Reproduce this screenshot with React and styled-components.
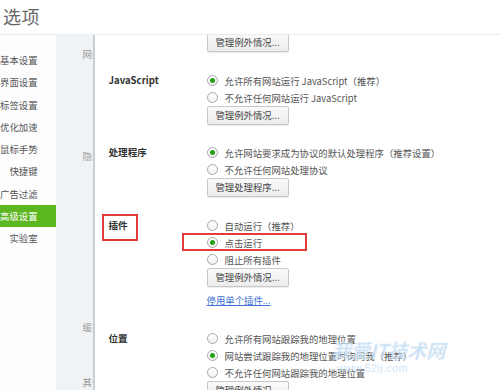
import React from "react";
import styled, { createGlobalStyle } from "styled-components";

const GlobalStyle = createGlobalStyle`
  html, body {
    margin: 0;
    padding: 0;
    background: #fff;
  }
  body {
    width: 500px;
    height: 390px;
    overflow: hidden;
    font-family: "Noto Sans CJK SC", "Noto Sans", sans-serif;
  }
`;

const Page = styled.div`
  position: relative;
  display: flex;
  flex-direction: column;
  width: 500px;
  height: 390px;
  overflow: hidden;
`;

const Header = styled.header`
  flex: 0 0 auto;
  height: 34px;
  padding-left: 3px;
  border-bottom: 1px solid #ececec;
  position: relative;
  z-index: 2;
  background: #fff;
`;

const Title = styled.h1`
  margin: 0;
  font-size: 18px;
  font-weight: normal;
  line-height: 33px;
  color: #666;
  letter-spacing: 0.5px;
`;

const Body = styled.div`
  flex: 1;
  display: flex;
  overflow: hidden;
`;

const Sidebar = styled.nav`
  flex: 0 0 55px;
  padding-top: 14px;
  background: #fdfdfe;
`;

const NavItem = styled.div`
  height: 22.3px;
  line-height: 22.3px;
  padding-right: 18px;
  text-align: right;
  font-size: 9.4px;
  white-space: nowrap;
  color: ${({ $active }) => ($active ? "#fff" : "#555")};
  background: ${({ $active }) => ($active ? "#5cb61f" : "transparent")};
`;

const Strip = styled.div`
  flex: 0 0 37px;
  display: flex;
  flex-direction: column;
  background: #f0f3f6;
  border-right: 2px solid #c9ced3;
  overflow: hidden;
`;

const StripHead = styled.div`
  margin-top: ${({ $gap }) => $gap}px;
  padding-left: 27px;
  height: 12px;
  line-height: 12px;
  font-size: 9.5px;
  color: #9a9a9a;
  white-space: nowrap;
`;

const Main = styled.main`
  flex: 1;
  padding-left: 14px;
  overflow: hidden;
`;

const Section = styled.section`
  display: grid;
  grid-template-columns: 98px 1fr;
  margin-top: ${({ $gap }) => $gap}px;
`;

const Label = styled.div`
  position: relative;
  align-self: start;
  height: 17px;
  line-height: 17px;
  font-size: 9.6px;
  font-weight: bold;
  color: #333;
  white-space: nowrap;
`;

const Options = styled.div`
  display: flex;
  flex-direction: column;
  align-items: flex-start;
`;

const Row = styled.label`
  position: relative;
  display: flex;
  align-items: center;
  gap: 7px;
  height: 17px;
  font-size: 9.4px;
  color: #555;
  white-space: nowrap;
`;

const Radio = styled.span`
  box-sizing: border-box;
  display: flex;
  align-items: center;
  justify-content: center;
  width: 11px;
  height: 11px;
  border-radius: 50%;
  border: 1px solid #a9a9a9;
  background: linear-gradient(#fff, #f1f1f1);
  &::after {
    content: "";
    display: ${({ $checked }) => ($checked ? "block" : "none")};
    width: 5px;
    height: 5px;
    border-radius: 50%;
    background: #23a014;
  }
`;

const Button = styled.button`
  box-sizing: border-box;
  height: 19px;
  width: 82px;
  margin-top: ${({ $offset }) => $offset || 0}px;
  padding: 0;
  border: 1px solid #c8c8c8;
  border-radius: 2px;
  background: linear-gradient(#fafafa, #ececec);
  box-shadow: 0 1px 1px rgba(0, 0, 0, 0.08);
  font-family: inherit;
  font-size: 9.4px;
  color: #444;
  text-align: center;
  line-height: 17px;
`;

const Link = styled.a`
  margin-top: 5px;
  height: 17px;
  line-height: 17px;
  font-size: 9.4px;
  color: #3e6fd6;
  text-decoration: underline;
`;

const Mark = styled.span`
  position: absolute;
  top: ${({ $top }) => $top}px;
  left: ${({ $left }) => $left}px;
  width: ${({ $w }) => $w}px;
  height: ${({ $h }) => $h}px;
  box-sizing: border-box;
  border: 2px solid #e53a3a;
  pointer-events: none;
`;

const Watermark = styled.div`
  position: absolute;
  left: 332px;
  top: 338px;
  display: flex;
  flex-direction: column;
  align-items: flex-start;
  pointer-events: none;
  opacity: 0.75;
`;

const WmTitle = styled.span`
  font-size: 19px;
  font-weight: bold;
  font-style: italic;
  line-height: 24px;
  color: #bcd9f2;
  -webkit-text-stroke: 0.5px #e2eef9;
  white-space: nowrap;
`;

const WmUrl = styled.span`
  margin-left: 5px;
  font-family: "Liberation Sans", sans-serif;
  font-size: 11px;
  line-height: 12px;
  color: #c4ddf2;
  letter-spacing: 0.3px;
`;

const navItems = ["基本设置", "界面设置", "标签设置", "优化加速", "鼠标手势", "快捷键", "广告过滤", "高级设置", "实验室"];

const Option = ({ checked, children, mark }) => (
  <Row>
    <Radio $checked={checked} />
    {children}
    {mark && <Mark $top={-1} $left={-25} $w={125} $h={18} />}
  </Row>
);

export default function App() {
  return (
    <>
      <GlobalStyle />
      <Page>
        <Header>
          <Title>选项</Title>
        </Header>
        <Body>
          <Sidebar>
            {navItems.map((item) => (
              <NavItem key={item} $active={item === "高级设置"}>
                {item}
              </NavItem>
            ))}
          </Sidebar>
          <Strip>
            <StripHead $gap={13}>网络内容</StripHead>
            <StripHead $gap={90}>隐私设置</StripHead>
            <StripHead $gap={159}>缓存目录</StripHead>
            <StripHead $gap={43}>其他</StripHead>
          </Strip>
          <Main>
            <Section $gap={0}>
              <div />
              <Options>
                <Button $offset={-2}>管理例外情况...</Button>
              </Options>
            </Section>

            <Section $gap={20}>
              <Label>JavaScript</Label>
              <Options>
                <Option checked>允许所有网站运行 JavaScript（推荐）</Option>
                <Option>不允许任何网站运行 JavaScript</Option>
                <Button>管理例外情况...</Button>
              </Options>
            </Section>

            <Section $gap={19}>
              <Label>处理程序</Label>
              <Options>
                <Option checked>允许网站要求成为协议的默认处理程序（推荐设置）</Option>
                <Option>不允许任何网站处理协议</Option>
                <Button>管理处理程序...</Button>
              </Options>
            </Section>

            <Section $gap={20}>
              <Label>
                插件
                <Mark $top={-3} $left={-7} $w={36} $h={27} />
              </Label>
              <Options>
                <Option>自动运行（推荐）</Option>
                <Option checked mark>
                  点击运行
                </Option>
                <Option>阻止所有插件</Option>
                <Button>管理例外情况...</Button>
                <Link href="#">停用单个插件...</Link>
              </Options>
            </Section>

            <Section $gap={21}>
              <Label>位置</Label>
              <Options>
                <Option>允许所有网站跟踪我的地理位置</Option>
                <Option checked>网站尝试跟踪我的地理位置时询问我（推荐）</Option>
                <Option>不允许任何网站跟踪我的地理位置</Option>
                <Button>管理例外情况...</Button>
              </Options>
            </Section>
          </Main>
        </Body>
        <Watermark>
          <WmTitle>我爱IT技术网</WmTitle>
          <WmUrl>www.52ij.com</WmUrl>
        </Watermark>
      </Page>
    </>
  );
}
